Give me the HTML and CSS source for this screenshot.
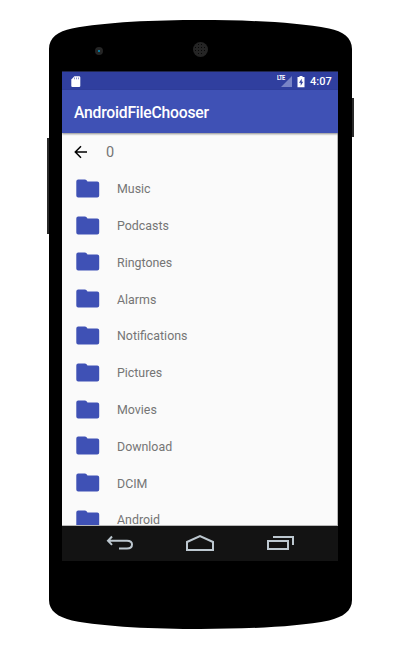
FILE: index.html
```
<!DOCTYPE html>
<html lang="en">
<head>
<meta charset="utf-8">
<title>AndroidFileChooser</title>
<link rel="stylesheet" href="styles.css">
</head>
<body>
<svg width="0" height="0" class="defs">
  <symbol id="folder" viewBox="0 0 24 19"><path d="M2.2 0.5H8.900Q9.800 .5 10.300 1.100L11.500 2.500H21.2Q23.200 2.500 23.200 4.500V16.600Q23.200 18.500 21.200 18.500H2.200Q.3 18.500 .3 16.600V2.500Q.3 .5 2.200 .5Z" fill="#3f51b5"/></symbol>
</svg>
<div class="phone">
  <svg class="shell" width="400" height="650" viewBox="0 0 400 650">
    <path d="M47 138H50V234H47ZM351 98H354V137H351Z" fill="#292929"/>
    <path d="M49 49C49 38 58 31 72 28.500C105 22 155 20 200.500 20C246 20 296 22 329 28.500C343 31 352 38 352 49V600C352 611 343 617 329 620.500C296 627 246 629 200.500 629C155 629 105 627 72 620.500C58 617 49 611 49 600Z" fill="#000"/>
    <circle cx="99" cy="51" r="4" fill="#252525"/>
    <rect x="98" y="50" width="2" height="2" fill="#087a9c"/>
    <circle cx="200.500" cy="49.500" r="7.500" fill="#252525"/>
    <path d="M198 44.500H204M195 47.500H207M195 50.500H207M198 53.500H204" stroke="#080808" stroke-dasharray="1 2"/>
  </svg>
  <main class="screen">
    <header class="status">
      <svg class="sd" width="10" height="12" viewBox="0 0 10 12"><path d="M3.400 .3H8.200Q9.300 .3 9.300 1.400V9.900Q9.300 11 8.200 11H1.400Q.3 11 .3 9.900V3.400Z" fill="#fff"/><path d="M3.500 1.500V3.300M5.500 1.500V3.300M7.500 1.500V3.300" stroke="#7f88c8" stroke-width=".9"/></svg>
      <div class="signal"><svg width="11" height="11" viewBox="0 0 11 11"><path d="M11 0V11H0Z" fill="#7984c6"/></svg><span class="lte">LTE</span></div>
      <svg class="battery" width="8" height="12" viewBox="0 0 8 12"><path d="M2.500 0H5.500V1H7.500V11.300H.5V1H2.500Z" fill="#fff"/><path d="M4.700 2.700L2 6.700H3.700V9.700L6.200 5.700H4.700Z" fill="#303f9f"/></svg>
      <span class="time">4:07</span>
    </header>
    <div class="toolbar">AndroidFileChooser</div>
    <section class="content">
      <div class="path"><svg width="14" height="14" viewBox="0 0 14 14" fill="none" stroke="#000" stroke-width="1.500"><path d="M7 1.300L1.300 7L7 12.700M1.500 7H13"/></svg><span>0</span></div>
      <ul class="files">
        <li><svg><use href="#folder"/></svg><span>Music</span></li>
        <li><svg><use href="#folder"/></svg><span>Podcasts</span></li>
        <li><svg><use href="#folder"/></svg><span>Ringtones</span></li>
        <li><svg><use href="#folder"/></svg><span>Alarms</span></li>
        <li><svg><use href="#folder"/></svg><span>Notifications</span></li>
        <li><svg><use href="#folder"/></svg><span>Pictures</span></li>
        <li><svg><use href="#folder"/></svg><span>Movies</span></li>
        <li><svg><use href="#folder"/></svg><span>Download</span></li>
        <li><svg><use href="#folder"/></svg><span>DCIM</span></li>
        <li><svg><use href="#folder"/></svg><span>Android</span></li>
      </ul>
    </section>
    <nav class="nav">
      <svg width="28" height="18" viewBox="0 0 28 18"><path d="M6 1.500L2 5.700L6 9.900M2 5.700H21Q26 5.700 26 9.500Q26 13.500 21 13.500H13" transform="translate(1 1)"/></svg>
      <svg width="28" height="18" viewBox="0 0 28 18"><path d="M1 16V8L14 2L27 8V16Z"/></svg>
      <svg width="28" height="18" viewBox="0 0 28 18"><path d="M1 7H21V15H1ZM6 3H26V11"/></svg>
    </nav>
  </main>
</div>
</body>
</html>
```
FILE: styles.css
```
* { box-sizing: border-box; }
body { margin: 0; background: #fff; font-family: Roboto, "Liberation Sans", sans-serif; }
.defs { position: absolute; }
.phone { position: relative; width: 400px; height: 650px; padding: 71px 62px 89px; overflow: hidden; }
.shell { position: absolute; left: 0; top: 0; }
.screen { position: relative; height: 490px; display: flex; flex-direction: column; background: #fafafa; }
.status { height: 19px; flex: none; display: flex; align-items: center; padding: 1px 7px 0 9px; background: #303f9f; border-top: 1px solid #20264d; color: #fff; }
.signal { position: relative; width: 11px; height: 11px; margin-left: auto; margin-right: 5px; }
.signal svg { display: block; }
.lte { position: absolute; left: -4px; top: -1px; font-size: 7px; line-height: 7px; font-weight: 700; transform: scaleX(.8); transform-origin: left; letter-spacing: -.5px; }
.battery { margin-right: 5px; }
.time { font-size: 11px; line-height: 15px; font-weight: 500; width: 21px; white-space: nowrap; }
.toolbar { position: relative; height: 43px; flex: none; padding-left: 12px; line-height: 45px; background: #3f51b5; color: #fff; font-size: 15.700px; letter-spacing: -.22px; font-weight: 500; box-shadow: 0 1px 2px rgba(0,0,0,.45); }
.content { flex: 1; min-height: 0; overflow: hidden; color: #757575; border: solid #b8b8b8; border-width: 0 1px 1px 0; }
.path { height: 37px; display: flex; align-items: center; padding-left: 12px; font-size: 14.500px; }
.path span { margin-left: 18px; padding-top: 1px; }
.files { list-style: none; margin: 0; padding: 0; font-size: 12.400px; }
.files li { height: 36.800px; display: flex; align-items: center; padding-left: 14px; }
.files svg { width: 24px; height: 19px; margin-right: 17px; }
.files span { padding-top: .8px; }
.nav { height: 35px; flex: none; display: flex; align-items: center; justify-content: center; gap: 53px; padding-bottom: 1px; background: #131313; }
.nav svg { fill: none; stroke: #bdc8d0; stroke-width: 2; }
```
